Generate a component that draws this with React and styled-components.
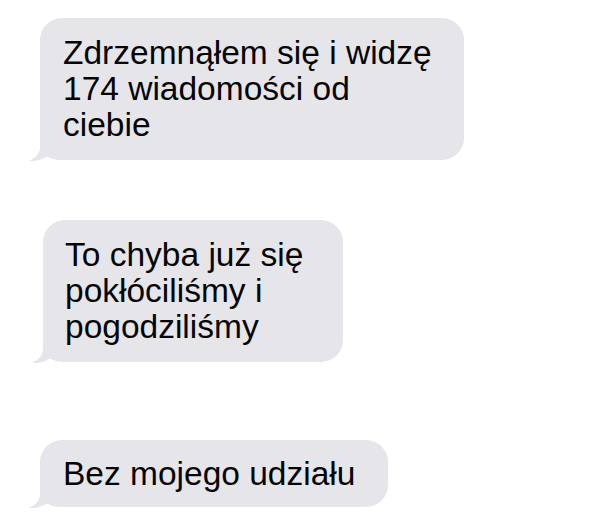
import React from 'react';
import styled, { createGlobalStyle } from 'styled-components';

const Global = createGlobalStyle`
body {
  margin: 0;
  background: #ffffff;
  font-family: "Liberation Sans", Arial, sans-serif;
}
`;

const Thread = styled.div`
box-sizing: border-box;
width: 600px;
height: 525px;
padding-top: 18px;
display: flex;
flex-direction: column;
align-items: flex-start;
background: #ffffff;
overflow: hidden;
`;

const Bubble = styled.div`
position: relative;
box-sizing: border-box;
width: ${p => p.$width}px;
margin-left: ${p => p.$left}px;
margin-top: ${p => p.$top || 0}px;
padding: ${p => p.$py}px 0 ${p => p.$py}px ${p => p.$pad}px;
background: #e5e5ea;
border-radius: 22px;
color: #050505;
font-size: 33.5px;
line-height: 36px;
white-space: nowrap;
`;

const Line = styled.div``;

const Tail = styled.svg`
position: absolute;
left: -12px;
bottom: -1px;
width: 34px;
height: 34px;
`;

const TailShape = () => (
    <Tail viewBox="0 0 34 34">
        <path
            d="M12 0 L12 20 C12 27 7 31 1 34 C8 34.5 14 32.5 19 29.5 C23 32 28 33 34 33 L34 0 Z"
            fill="#e5e5ea"
        />
    </Tail>
);

const messages = [
    { lines: ['Zdrzemnąłem się i widzę', '174 wiadomości od', 'ciebie'], width: 424, left: 40, pad: 23, top: 0, py: 17 },
    { lines: ['To chyba już się', 'pokłóciliśmy i', 'pogodziliśmy'], width: 300, left: 43, pad: 22, top: 60, py: 17 },
    { lines: ['Bez mojego udziału'], width: 348, left: 40, pad: 23, top: 78, py: 15.5 },
];

export default function App() {
    return (
        <>
            <Global />
            <Thread>
                {messages.map((m, i) => (
                    <Bubble key={i} $width={m.width} $left={m.left} $pad={m.pad} $top={m.top} $py={m.py}>
                        {m.lines.map((l, j) => <Line key={j}>{l}</Line>)}
                        <TailShape />
                    </Bubble>
                ))}
            </Thread>
        </>
    );
}
